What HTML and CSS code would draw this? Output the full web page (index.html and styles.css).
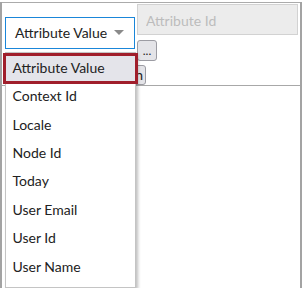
FILE: index.html
```html
<!DOCTYPE html>
<html lang="en">
<head>
	<meta charset="UTF-8">
	<title>Condition editor</title>
	<link rel="stylesheet" href="styles.css">
</head>
<body>
	<div class="frame">
		<div class="editor">
			<div class="select">Attribute Value<span class="caret"></span></div>
			<input class="id_field" type="text" placeholder="Attribute Id" disabled>
			<button class="btn dots">...</button>
			<div class="actions"><button class="btn">Add Condition</button></div>
		</div>
		<div class="rows"></div>
		<ul class="menu">
			<li class="active">Attribute Value</li>
			<li>Context Id</li>
			<li>Locale</li>
			<li>Node Id</li>
			<li>Today</li>
			<li>User Email</li>
			<li>User Id</li>
			<li>User Name</li>
		</ul>
	</div>
</body>
</html>
```

FILE: styles.css
```css
html,body{margin: 0;padding: 0;background: #fff;}
body{font-family: "Segoe UI", Lato, "Noto Sans", sans-serif;font-size: 14px;color: #222;}

.frame{position: relative;width: 302px;height: 288px;box-sizing: border-box;border: 2px solid #a3a3a3;border-top: 0;}
.editor{margin-top: 2px;border-top: 1px solid #ababab;display: grid;grid-template-columns: 135px 1fr;grid-template-rows: 32px 26px 24px;}

.select{grid-row: 1 / 3;grid-column: 1;margin: 14px 0 0 3px;width: 130px;height: 32px;box-sizing: border-box;border: 1px solid #1a86d9;padding: 0 0 1px 9px;display: flex;align-items: center;}
.caret{margin: 0 10px 0 auto;width: 0;height: 0;border-left: 5px solid transparent;border-right: 5px solid transparent;border-top: 5px solid #8a8a8a;}

.id_field{grid-row: 1;grid-column: 2;margin: 1px 0 0;width: 161px;height: 31px;box-sizing: border-box;border: 1px solid #d2d2d2;background: #ececec;padding: 2px 0 0 8px;font: inherit;outline: none;}
.id_field::placeholder{color: #bcbcbc;}

.btn{height: 20px;box-sizing: border-box;border: 1px solid #9c9ca3;border-radius: 3px;background: #e4e4e8;font: inherit;color: #222;padding: 0 2px;line-height: 16px;}
.dots{grid-row: 2;grid-column: 2;justify-self: start;margin-top: 5px;width: 20px;height: 21px;padding: 0;font-size: 12px;}
.actions{grid-row: 3;grid-column: 1 / 3;width: 144px;padding-top: 4px;display: flex;justify-content: flex-end;}

.rows{border-top: 1px solid #a8a8a8;}

.menu{position: absolute;left: 3px;top: 50px;width: 131px;height: 236px;box-sizing: border-box;margin: 0;padding: 0;list-style: none;background: #fff;border: 1px solid #c4c4c4;box-shadow: 2px 2px 3px rgba(0,0,0,.25);}
.menu li{height: 28.4px;box-sizing: border-box;padding: 0 0 5px 6.5px;display: flex;align-items: center;}
.menu li.active{height: 31px;margin: 0 -3px;padding-bottom: 3px;border: 3px solid #a01e2b;background: #e4e4ea;}
```
